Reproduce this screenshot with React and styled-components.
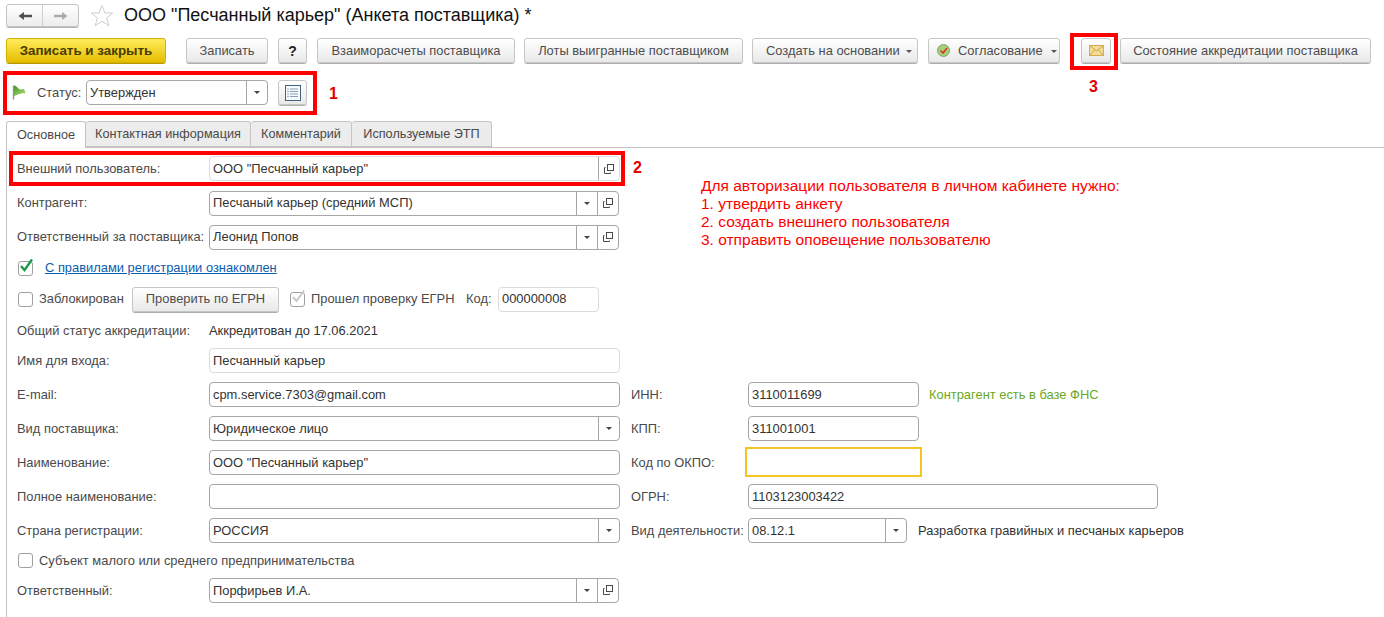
import React from 'react';
import styled, { createGlobalStyle, css } from 'styled-components';

const GlobalStyle = createGlobalStyle`
	html, body {
		margin: 0;
		height: 617px;
		overflow: hidden;
		background: #fff;
	}
	body {
		font-family: 'Liberation Sans', Arial, sans-serif;
		font-size: 12.9px;
		color: #4a4a4a;
	}
	* { box-sizing: border-box; }
`;

const TitleBar = styled.div`
	display: flex;
	align-items: center;
	height: 23px;
	margin: 4px 0 0 6px;
`;

const NavGroup = styled.div`
	display: flex;
	width: 73px;
	height: 23px;
	border: 1px solid #c4c4c4;
	border-radius: 3px;
	background: linear-gradient(#fff, #ececec);
	box-shadow: 0 1px 0 #b4b4b4;
`;

const NavButton = styled.div`
	flex: 1;
	display: flex;
	align-items: center;
	justify-content: center;
	& + & { border-left: 1px solid #cfcfcf; }
`;

const Title = styled.h1`
	margin: 0 0 0 10px;
	font-size: 18px;
	font-weight: 400;
	color: #111;
	line-height: 23px;
`;

const Toolbar = styled.div`
	display: flex;
	height: 25px;
	margin: 11px 0 0 6px;
`;

const Button = styled.div`
	display: flex;
	align-items: center;
	justify-content: ${p => (p.$pl ? 'flex-start' : 'center')};
	gap: ${p => p.$gap || 5}px;
	width: ${p => p.$w}px;
	height: 25px;
	margin-left: ${p => p.$ml || 0}px;
	padding-left: ${p => p.$pl || 0}px;
	border: 1px solid #c6c6c6;
	border-radius: 3px;
	background: linear-gradient(#fff, #e9e9e9);
	box-shadow: 0 1px 0 #aeaeae;
	color: #4d4d4d;
	font-size: 12.9px;
	white-space: nowrap;
	flex: none;
`;

const PrimaryButton = styled(Button)`
	border-color: #d2b100;
	background: linear-gradient(#ffec5c, #e6bd00);
	box-shadow: 0 1px 0 #b89a00;
	color: #4a3d00;
	font-weight: 700;
	font-size: 13.4px;
`;

const HelpButton = styled(Button)`
	color: #222;
	font-weight: 700;
	font-size: 14px;
`;

const Caret = styled.span`
	display: inline-block;
	width: 0;
	height: 0;
	margin-top: 2px;
	border: 3px solid transparent;
	border-top: 3px solid #555;
	border-bottom: 0;
`;

const MailSlot = styled.div`
	position: relative;
	flex: none;
	margin: 0 9px 0 21px;
`;

const MailFrame = styled.div`
	position: absolute;
	left: -11px;
	top: -5px;
	width: 48px;
	height: 37px;
	border: 4px solid #f00;
`;

const Marker = styled.span`
	position: absolute;
	left: ${p => p.$x}px;
	top: ${p => p.$y}px;
	color: #e30000;
	font-size: 16px;
	font-weight: 700;
	line-height: 18px;
`;

const StatusFrame = styled.div`
	position: relative;
	display: flex;
	align-items: center;
	width: 314px;
	height: 44px;
	margin: 8px 0 0 3px;
	padding: 0 0 1px 5px;
	border: 4px solid #f00;
`;

const StatusLabel = styled.span`
	flex: none;
	width: 43px;
	margin: 0 6px 0 11px;
	white-space: nowrap;
`;

const Tabs = styled.div`
	display: flex;
	height: 26px;
	margin: 6px 0 0 6px;
`;

const Tab = styled.div`
	display: flex;
	align-items: center;
	justify-content: center;
	width: ${p => p.$w}px;
	height: ${p => (p.$active ? 27 : 26)}px;
	border: 1px solid #c4c4c4;
	border-left-width: ${p => (p.$first ? 1 : 0)}px;
	border-bottom-width: ${p => (p.$active ? 0 : 1)}px;
	border-radius: 3px 3px 0 0;
	background: ${p => (p.$active ? '#fff' : '#ececec')};
	position: relative;
	font-size: 12.7px;
	color: #4a4a4a;
	white-space: nowrap;
`;

const Panel = styled.div`
	margin-left: 6px;
	height: 470px;
	border-top: 1px solid #c4c4c4;
	border-left: 1px solid #c4c4c4;
`;

const Split = styled.div`
	display: flex;
`;

const LeftColumn = styled.div`
	width: 618px;
	flex: none;
`;

const Note = styled.div`
	margin: 29px 0 0 76px;
	color: #f00;
	font-size: 15.5px;
	line-height: 18px;
	white-space: nowrap;
`;

const UserFrame = styled.div`
	position: relative;
	display: flex;
	align-items: center;
	width: 616px;
	height: 35px;
	margin: 3px 0 0 2px;
	padding-left: 4px;
	border: 4px solid #f00;
`;

const Label = styled.span`
	flex: none;
	width: ${p => p.$w || 192}px;
	white-space: nowrap;
`;

const RightLabel = styled(Label)`
	width: 117px;
	margin-left: ${p => p.$ml || 11}px;
`;

const Field = styled.div`
	display: flex;
	align-items: stretch;
	flex: none;
	width: ${p => p.$w || 411}px;
	height: 25px;
	border: 1px solid ${p => (p.$pale ? '#dcdcdc' : '#a6a6a6')};
	border-radius: 4px;
	background: #fff;
	color: #333;
	margin-left: ${p => p.$ml || 0}px;
`;

const WarnField = styled.div`
	flex: none;
	width: 177px;
	height: 30px;
	margin-left: -3px;
	border: 2px solid #f5c422;
`;

const FieldText = styled.span`
	flex: 1;
	display: flex;
	align-items: center;
	padding-left: 3px;
	white-space: nowrap;
	overflow: hidden;
	font-size: 12.9px;
`;

const FieldButton = styled.span`
	flex: none;
	display: flex;
	align-items: center;
	justify-content: center;
	width: 21px;
	border-left: 1px solid #a6a6a6;
`;

const Arrow = styled.i`
	display: block;
	width: 0;
	height: 0;
	border: 3px solid transparent;
	border-top: 3px solid #444;
	border-bottom: 0;
`;

const Box = styled.span`
	display: flex;
	align-items: center;
	justify-content: center;
	flex: none;
	width: 15px;
	height: 15px;
	margin: 0 ${p => p.$mr ?? 6}px 0 ${p => p.$ml ?? 1}px;
	border: 1px solid #a0a0a0;
	border-radius: 3px;
	background: #fff;
`;

const LinkText = styled.a`
	margin-left: 12px;
	color: #0b5cad;
	text-decoration: underline;
	white-space: nowrap;
`;

const PlainValue = styled.span`
	color: #333;
	white-space: nowrap;
	margin-left: ${p => p.$ml || 0}px;
`;

const GreenText = styled.span`
	margin-left: 10px;
	color: #6aa81e;
	white-space: nowrap;
`;

const Inline = styled.span`
	flex: none;
	width: ${p => (p.$w ? `${p.$w}px` : 'auto')};
	white-space: nowrap;
	margin-left: ${p => p.$ml || 0}px;
`;

// upper rows sit their text one pixel higher than the fields around it
const raisedText = css`
	${Label}, ${Inline}, ${LinkText} { margin-bottom: 2px; }
	${FieldText} { padding-bottom: 2px; }
	${Button} { padding-bottom: 2px; }
`;

const Row = styled.div`
	display: flex;
	align-items: center;
	height: ${p => p.$h || 34}px;
	padding-left: 10px;
	${p => p.$raised && raisedText}
`;

const ArrowIcon = ({ back }) => (
	<svg width="14" height="12" viewBox="0 0 14 12">
		<path
			d={back ? 'M0.5 6L6 2V4.7H14V7.3H6V10Z' : 'M13.5 6L8 2V4.7H0V7.3H8V10Z'}
			fill={back ? '#4f4f4f' : '#ababab'}
		/>
	</svg>
);

const Star = () => (
	<svg width="24" height="24" viewBox="0 0 24 24" style={{ marginLeft: 11 }}>
		<path
			d="M12 1.5L15 9H22.7L16.6 13.9L18.8 21.8L12 17.2L5.2 21.8L7.4 13.9L1.3 9H9Z"
			fill="#fff"
			stroke="#cdcdcd"
		/>
	</svg>
);

const CheckCircle = () => (
	<svg width="13" height="13" viewBox="0 0 13 13">
		<circle cx="6.5" cy="6.5" r="6" fill="#a5cf7c" stroke="#7fa85c" />
		<path d="M3.5 6.5L6 9L10 4" fill="none" stroke="#e0322a" strokeWidth="1.6" />
	</svg>
);

const MailIcon = () => (
	<svg width="15" height="11" viewBox="0 0 15 11">
		<rect x="0.5" y="0.5" width="14" height="10" fill="#f5dc96" stroke="#d6ac4f" />
		<path d="M1 1L7.5 6L14 1M1 10L5.5 5M14 10L9.5 5" fill="none" stroke="#cfa548" />
	</svg>
);

const Flag = () => (
	<svg width="14" height="15" viewBox="0 0 14 15" style={{ flex: 'none' }}>
		<defs>
			<linearGradient id="flagFill" x1="0" y1="0" x2="0.7" y2="1">
				<stop offset="0" stopColor="#3f922c" />
				<stop offset="1" stopColor="#a6dc6c" />
			</linearGradient>
		</defs>
		<path d="M1.5 0.5V14.5" stroke="#8c9a86" strokeWidth="1.4" />
		<path d="M2 0.5C5 0.5 6 4.5 9 4.5C10.5 4.5 11 4 12 4L13.8 8.5C10 8 8 9 6 9.5C4.5 10 3 10.5 2 11.5Z" fill="url(#flagFill)" />
	</svg>
);

const ListIcon = () => (
	<svg width="16" height="16" viewBox="0 0 16 16">
		<rect x="0.5" y="0.5" width="15" height="15" fill="#f7fafc" stroke="#44627f" />
		<path d="M5 4H13M5 6.5H13M5 9H13M5 11.5H13" stroke="#8ba0b4" />
		<path d="M2.5 4H3.5M2.5 6.5H3.5M2.5 9H3.5M2.5 11.5H3.5" stroke="#44627f" />
	</svg>
);

const OpenIcon = () => (
	<svg width="10" height="10" viewBox="0 0 10 10">
		<rect x="3.5" y="0.5" width="6" height="6" fill="none" stroke="#4a4a4a" />
		<path d="M1.5 3.5H0.5V9.5H6.5V8.5" fill="none" stroke="#4a4a4a" />
	</svg>
);

const Tick = ({ color, width }) => (
	<svg width="16" height="16" viewBox="0 0 16 16" style={{ marginTop: -4, overflow: 'visible' }}>
		<path d="M3 8L6.5 12L14 1.5" fill="none" stroke={color} strokeWidth={width} />
	</svg>
);

const SelectField = ({ w, value, open, ml }) => (
	<Field $w={w} $ml={ml}>
		<FieldText>{value}</FieldText>
		<FieldButton><Arrow /></FieldButton>
		{open && <FieldButton><OpenIcon /></FieldButton>}
	</Field>
);

const App = () => (
	<>
		<GlobalStyle />
		<TitleBar>
			<NavGroup>
				<NavButton><ArrowIcon back /></NavButton>
				<NavButton><ArrowIcon /></NavButton>
			</NavGroup>
			<Star />
			<Title>ООО "Песчанный карьер" (Анкета поставщика) *</Title>
		</TitleBar>

		<Toolbar>
			<PrimaryButton $w={160}>Записать и закрыть</PrimaryButton>
			<Button $w={82} $ml={20}>Записать</Button>
			<HelpButton $w={29} $ml={10}>?</HelpButton>
			<Button $w={198} $ml={10}>Взаиморасчеты поставщика</Button>
			<Button $w={219} $ml={9}>Лоты выигранные поставщиком</Button>
			<Button $w={166} $ml={9} $pl={13} $gap={6}>Создать на основании<Caret /></Button>
			<Button $w={132} $ml={10} $pl={8} $gap={8}><CheckCircle />Согласование<Caret /></Button>
			<MailSlot>
				<Button $w={30}><MailIcon /></Button>
				<MailFrame />
				<Marker $x={8} $y={40}>3</Marker>
			</MailSlot>
			<Button $w={251}>Состояние аккредитации поставщика</Button>
		</Toolbar>

		<StatusFrame>
			<Flag />
			<StatusLabel>Статус:</StatusLabel>
			<Field $w={182}>
				<FieldText>Утвержден</FieldText>
				<FieldButton><Arrow /></FieldButton>
			</Field>
			<Button $w={29} $ml={10}><ListIcon /></Button>
			<Marker $x={322} $y={10}>1</Marker>
		</StatusFrame>

		<Tabs>
			<Tab $w={80} $active $first>Основное</Tab>
			<Tab $w={165}>Контактная информация</Tab>
			<Tab $w={101}>Комментарий</Tab>
			<Tab $w={140}>Используемые ЭТП</Tab>
		</Tabs>

		<Panel>
			<Split>
				<LeftColumn>
					<UserFrame>
						<Label>Внешний пользователь:</Label>
						<Field $pale>
							<FieldText>ООО "Песчанный карьер"</FieldText>
							<FieldButton><OpenIcon /></FieldButton>
						</Field>
						<Marker $x={620} $y={4}>2</Marker>
					</UserFrame>
					<Row $raised>
						<Label>Контрагент:</Label>
						<SelectField w={410} value='Песчаный карьер (средний МСП)' open />
					</Row>
					<Row $raised>
						<Label>Ответственный за поставщика:</Label>
						<SelectField w={410} value='Леонид Попов' open />
					</Row>
					<Row $h={28} $raised>
						<Box $mr={0}><Tick color='#1f9a4c' width='2.4' /></Box>
						<LinkText>С правилами регистрации ознакомлен</LinkText>
					</Row>
					<Row $raised>
						<Box><span /></Box>
						<Inline $w={83}>Заблокирован</Inline>
						<Button $w={147} $ml={10}>Проверить по ЕГРН</Button>
						<Box $ml={11}><Tick color='#c8c8c8' width='2' /></Box>
						<Inline $w={145}>Прошел проверку ЕГРН</Inline>
						<Inline $w={24} $ml={10}>Код:</Inline>
						<Field $pale $w={101} $ml={8}><FieldText>000000008</FieldText></Field>
					</Row>
				</LeftColumn>
				<Note>
					Для авторизации пользователя в личном кабинете нужно:<br />
					1. утвердить анкету<br />
					2. создать внешнего пользователя<br />
					3. отправить оповещение пользователю
				</Note>
			</Split>

			<Row $h={28}>
				<Label>Общий статус аккредитации:</Label>
				<PlainValue>Аккредитован до 17.06.2021</PlainValue>
			</Row>
			<Row $h={33}>
				<Label>Имя для входа:</Label>
				<Field $pale><FieldText>Песчанный карьер</FieldText></Field>
			</Row>
			<Row>
				<Label>E-mail:</Label>
				<Field><FieldText>cpm.service.7303@gmail.com</FieldText></Field>
				<RightLabel>ИНН:</RightLabel>
				<Field $w={171}><FieldText>3110011699</FieldText></Field>
				<GreenText>Контрагент есть в базе ФНС</GreenText>
			</Row>
			<Row>
				<Label>Вид поставщика:</Label>
				<SelectField w={411} value='Юридическое лицо' />
				<RightLabel>КПП:</RightLabel>
				<Field $w={171}><FieldText>311001001</FieldText></Field>
			</Row>
			<Row>
				<Label>Наименование:</Label>
				<Field><FieldText>ООО "Песчанный карьер"</FieldText></Field>
				<RightLabel>Код по ОКПО:</RightLabel>
				<WarnField />
			</Row>
			<Row>
				<Label>Полное наименование:</Label>
				<Field />
				<RightLabel>ОГРН:</RightLabel>
				<Field $w={410}><FieldText>1103123003422</FieldText></Field>
			</Row>
			<Row>
				<Label>Страна регистрации:</Label>
				<SelectField w={411} value='РОССИЯ' />
				<RightLabel>Вид деятельности:</RightLabel>
				<SelectField w={159} value='08.12.1' />
				<PlainValue $ml={11}>Разработка гравийных и песчаных карьеров</PlainValue>
			</Row>
			<Row $h={26}>
				<Box><span /></Box>
				<Inline>Субъект малого или среднего предпринимательства</Inline>
			</Row>
			<Row>
				<Label>Ответственный:</Label>
				<SelectField w={410} value='Порфирьев И.А.' open />
			</Row>
		</Panel>
	</>
);

export default App;
